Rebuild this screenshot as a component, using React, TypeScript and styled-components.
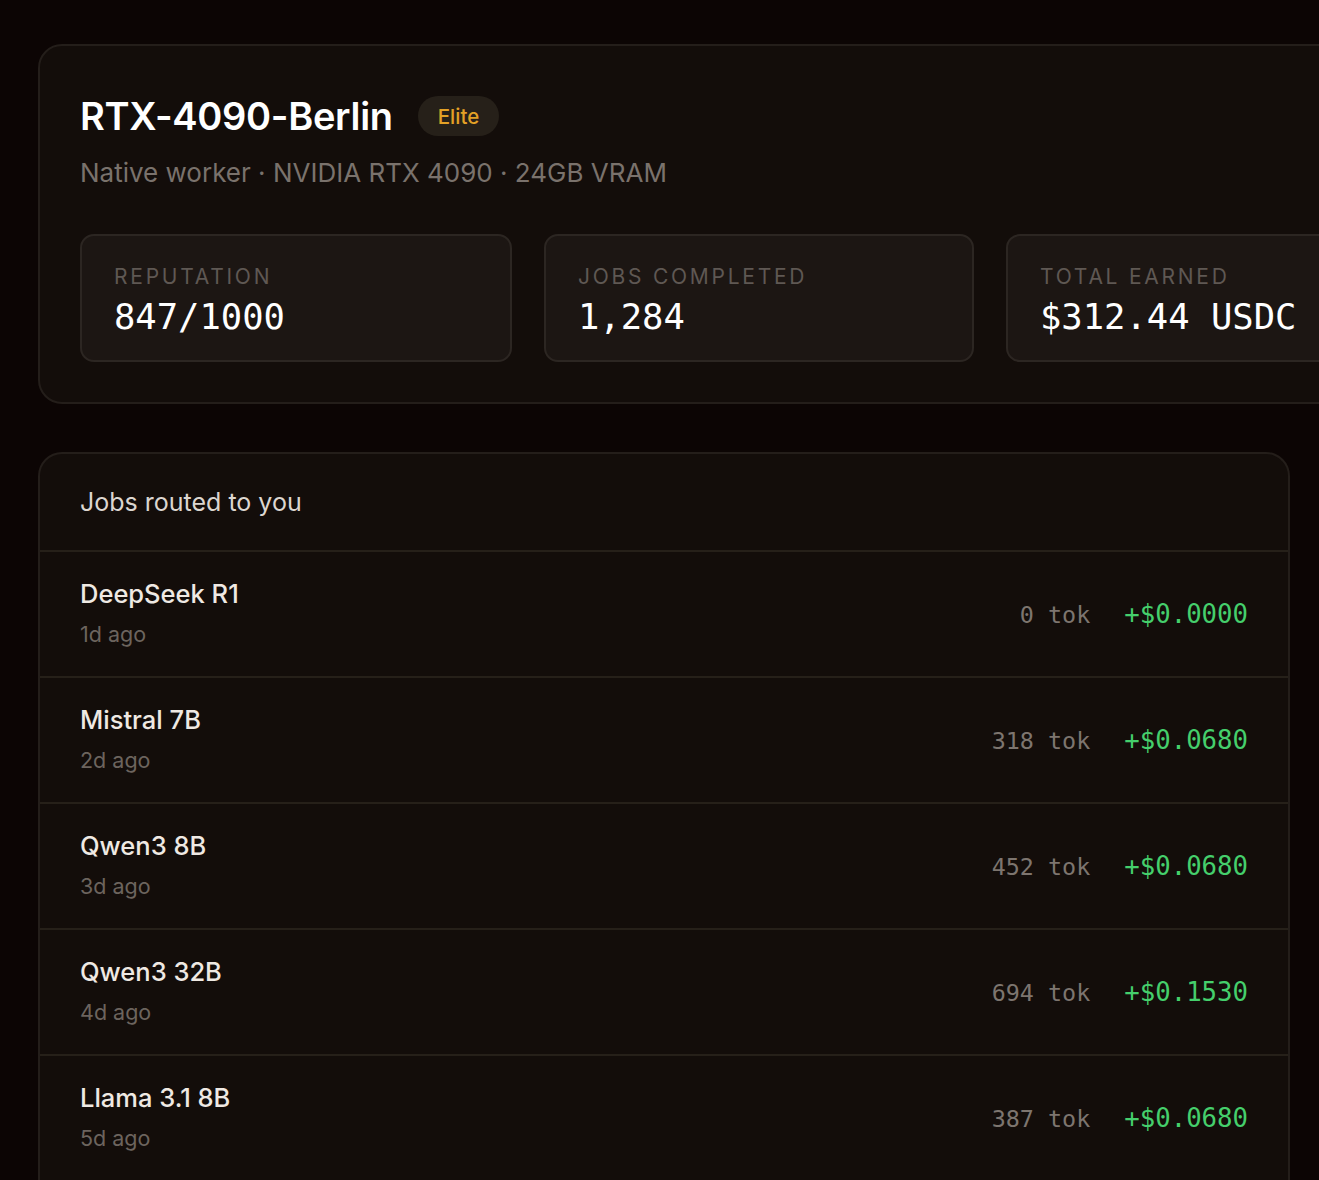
import styled, { createGlobalStyle } from 'styled-components';

const GlobalStyle = createGlobalStyle`
  html, body {
    margin: 0;
    padding: 0;
    background: #0c0504;
    overflow: hidden;
  }
  body {
    font-family: Inter, "Noto Sans", sans-serif;
    color: #f4efea;
  }
`;

const MONO = `"DejaVu Sans Mono", "Liberation Mono", monospace`;

type Job = {
  model: string;
  ago: string;
  tokens: number;
  earned: string;
};

const jobs: Job[] = [
  { model: 'DeepSeek R1', ago: '1d ago', tokens: 0, earned: '+$0.0000' },
  { model: 'Mistral 7B', ago: '2d ago', tokens: 318, earned: '+$0.0680' },
  { model: 'Qwen3 8B', ago: '3d ago', tokens: 452, earned: '+$0.0680' },
  { model: 'Qwen3 32B', ago: '4d ago', tokens: 694, earned: '+$0.1530' },
  { model: 'Llama 3.1 8B', ago: '5d ago', tokens: 387, earned: '+$0.0680' },
];

const Page = styled.div`
  display: flex;
  flex-direction: column;
  gap: 48px;
  padding: 44px 0 0 38px;
  width: 1252px;
`;

const Card = styled.section`
  background: #130d0a;
  border: 2px solid #241e1a;
  border-radius: 24px;
  box-sizing: border-box;
`;

const Header = styled(Card)`
  width: 1500px;
  padding: 48px 40px 40px;
`;

const TitleRow = styled.div`
  display: flex;
  align-items: center;
  gap: 25px;
`;

const Title = styled.h1`
  margin: 0;
  font-size: 38px;
  font-weight: 600;
  letter-spacing: -0.3px;
  line-height: 44px;
  color: #ffffff;
`;

const Badge = styled.span`
  display: inline-flex;
  align-items: center;
  height: 40px;
  padding: 0 20px;
  border-radius: 20px;
  background: #262019;
  color: #e3a126;
  font-size: 20.5px;
  font-weight: 500;
`;

const Subtitle = styled.div`
  margin-top: 18px;
  font-size: 26px;
  color: #7a726c;
  line-height: 34px;
`;

const StatGrid = styled.div`
  display: grid;
  grid-template-columns: 432px 430px 430px;
  gap: 32px;
  margin-top: 44px;
`;

const StatBox = styled.div`
  background: #1c1613;
  border: 2px solid #2c2622;
  border-radius: 14px;
  padding: 27px 32px 20px;
  height: 128px;
  box-sizing: border-box;
`;

const StatLabel = styled.div`
  font-size: 21px;
  letter-spacing: 2.75px;
  text-transform: uppercase;
  color: #5f5853;
  line-height: 28px;
`;

const StatValue = styled.div`
  margin-top: 4px;
  font-family: ${MONO};
  font-size: 35.5px;
  line-height: 44px;
  color: #ffffff;
`;

const JobsCard = styled(Card)`
  width: 1252px;
  border-bottom: none;
  border-bottom-left-radius: 0;
  border-bottom-right-radius: 0;
`;

const JobsHeader = styled.div`
  height: 96px;
  padding: 0 40px;
  display: flex;
  align-items: center;
  font-size: 25px;
  color: #dcd6d0;
  border-bottom: 2px solid #262019;
`;

const JobRow = styled.div`
  height: 124px;
  padding: 0 40px;
  display: flex;
  align-items: center;
  justify-content: space-between;
  border-bottom: 2px solid #262019;
`;

const JobInfo = styled.div`
  display: flex;
  flex-direction: column;
  gap: 10px;
  margin-top: -2px;
`;

const JobName = styled.div`
  font-size: 25.5px;
  line-height: 32px;
  color: #efe9e3;
  font-weight: 500;
`;

const JobAgo = styled.div`
  font-size: 21.5px;
  line-height: 28px;
  color: #6c645e;
`;

const JobMeta = styled.div`
  display: flex;
  align-items: baseline;
  gap: 34px;
  font-family: ${MONO};
`;

const Tokens = styled.span`
  font-size: 23.4px;
  color: #7d756f;
`;

const Earned = styled.span`
  font-size: 25.7px;
  color: #45cf6c;
`;

export default function App() {
  return (
    <>
      <GlobalStyle />
      <Page>
        <Header>
          <TitleRow>
            <Title>RTX-4090-Berlin</Title>
            <Badge>Elite</Badge>
          </TitleRow>
          <Subtitle>Native worker · NVIDIA RTX 4090 · 24GB VRAM</Subtitle>
          <StatGrid>
            <StatBox>
              <StatLabel>Reputation</StatLabel>
              <StatValue>847/1000</StatValue>
            </StatBox>
            <StatBox>
              <StatLabel>Jobs completed</StatLabel>
              <StatValue>1,284</StatValue>
            </StatBox>
            <StatBox>
              <StatLabel>Total earned</StatLabel>
              <StatValue>$312.44 USDC</StatValue>
            </StatBox>
          </StatGrid>
        </Header>
        <JobsCard>
          <JobsHeader>Jobs routed to you</JobsHeader>
          {jobs.map((job) => (
            <JobRow key={job.model}>
              <JobInfo>
                <JobName>{job.model}</JobName>
                <JobAgo>{job.ago}</JobAgo>
              </JobInfo>
              <JobMeta>
                <Tokens>{job.tokens} tok</Tokens>
                <Earned>{job.earned}</Earned>
              </JobMeta>
            </JobRow>
          ))}
        </JobsCard>
      </Page>
    </>
  );
}
